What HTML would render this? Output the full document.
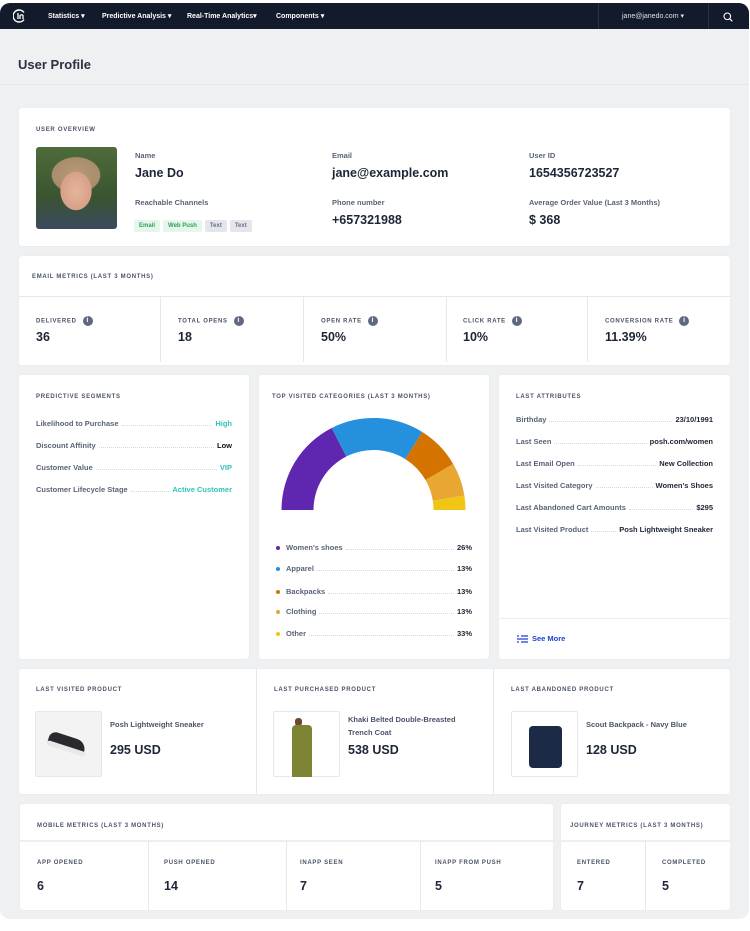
<!DOCTYPE html>
<html><head><meta charset="utf-8"><style>
*{box-sizing:border-box;margin:0;padding:0}
body{width:750px;height:931px;background:#fff;font-family:"Liberation Sans",sans-serif;color:#1e2536;position:relative;overflow:hidden}
.frame{position:absolute;left:0;top:3px;width:749px;height:916px;background:#eff0f2;border-radius:10px;overflow:hidden}
.nav{position:absolute;left:0;top:3px;width:749px;height:26px;background:#131a2b;border-radius:10px 10px 0 0}
.nav span{position:absolute;top:9px;color:#fff;font-size:7px;font-weight:bold}
.a{position:absolute}
.card{position:absolute;background:#fff;border-radius:3px;box-shadow:0 0 1px rgba(0,0,0,.08)}
.lbl{position:absolute;font-size:6px;font-weight:bold;letter-spacing:.7px;color:#4a5368}
.sm{position:absolute;font-size:7.5px;font-weight:bold;color:#5a6378}
.big{position:absolute;font-size:12.5px;font-weight:bold;color:#1e2536}
.vl{position:absolute;width:1px;background:#e6e8ec}
.hl{position:absolute;height:1px;background:#e6e8ec}
.row{position:absolute;display:flex;align-items:flex-end;font-size:7.5px;font-weight:bold;color:#5a6378}
.row .d{flex:1;border-bottom:1px dotted #d5d8de;margin:0 3px 2px}
.row b{color:#1e2536}
.tag{display:inline-block;font-size:6px;font-weight:bold;padding:3px 5px;border-radius:2px;margin-right:3px}
.i{display:inline-block;width:10px;height:10px;border-radius:50%;background:#5f6880;color:#fff;font-size:7px;text-align:center;line-height:10px;vertical-align:middle;margin-left:6px}
.dot{display:inline-block;width:4px;height:4px;border-radius:50%;margin-right:6px;vertical-align:middle}
</style></head><body>
<div class="frame"></div>
<div class="nav">
<svg class="a" style="left:13px;top:6px" width="14" height="14" viewBox="0 0 14 14"><path d="M11 3.5A6 6 0 1 0 11 10.5" stroke="#fff" stroke-width="1.4" fill="none"/><path d="M5 4v6M7 10V6.5q2-1.5 3 0V10" stroke="#fff" stroke-width="1.3" fill="none"/></svg>
<span style="left:48px">Statistics ▾</span><span style="left:102px">Predictive Analysis ▾</span><span style="left:187px">Real-Time Analytics▾</span><span style="left:276px">Components ▾</span>
<div class="a" style="left:598px;top:0;width:1px;height:26px;background:#2a3142"></div>
<div class="a" style="left:708px;top:0;width:1px;height:26px;background:#2a3142"></div>
<span style="left:622px;font-weight:normal;color:#dfe2e8">jane@janedo.com ▾</span>
<svg class="a" style="left:723px;top:9px" width="10" height="10" viewBox="0 0 10 10"><circle cx="4.3" cy="4.3" r="3.3" stroke="#fff" stroke-width="1.1" fill="none"/><path d="M6.8 6.8L9.3 9.3" stroke="#fff" stroke-width="1.2"/></svg>
</div>
<div class="a" style="left:0;top:84px;width:749px;height:1px;background:#e4e6ea"></div>
<div class="a" style="left:18px;top:57px;font-size:13px;font-weight:bold;color:#2a3142">User Profile</div>

<div class="card" style="left:19px;top:108px;width:711px;height:138px"></div>
<div class="lbl" style="left:36px;top:127px">USER OVERVIEW</div>
<div class="a" style="left:36px;top:147px;width:81px;height:82px;border-radius:3px;background:radial-gradient(ellipse 22px 27px at 40px 44px,#e6b59c 0,#d7a088 70%,transparent 72%),radial-gradient(ellipse 30px 22px at 40px 28px,#b79c78 0,#a88c6c 80%,transparent 82%),linear-gradient(180deg,#4f6c3a,#3a5530 60%,#3b4a5e)"></div>
<div class="sm" style="left:135px;top:151px">Name</div><div class="big" style="left:135px;top:166px">Jane Do</div>
<div class="sm" style="left:135px;top:198px">Reachable Channels</div>
<div class="a" style="left:134px;top:214px"><span class="tag" style="background:#e6f6ec;color:#2aa35a">Email</span><span class="tag" style="background:#e6f6ec;color:#2aa35a">Web Push</span><span class="tag" style="background:#e4e6ec;color:#6a7285">Text</span><span class="tag" style="background:#e4e6ec;color:#6a7285">Text</span></div>
<div class="sm" style="left:332px;top:151px">Email</div><div class="big" style="left:332px;top:166px">jane@example.com</div>
<div class="sm" style="left:332px;top:198px">Phone number</div><div class="big" style="left:332px;top:213px">+657321988</div>
<div class="sm" style="left:529px;top:151px">User ID</div><div class="big" style="left:529px;top:166px">1654356723527</div>
<div class="sm" style="left:529px;top:198px">Average Order Value (Last 3 Months)</div><div class="big" style="left:529px;top:213px">$ 368</div>

<div class="card" style="left:19px;top:256px;width:711px;height:109px"></div>
<div class="lbl" style="left:32px;top:274px">EMAIL METRICS (LAST 3 MONTHS)</div>
<div class="hl" style="left:19px;top:296px;width:711px"></div>
<div class="vl" style="left:160px;top:296px;height:66px"></div><div class="vl" style="left:303px;top:296px;height:66px"></div><div class="vl" style="left:446px;top:296px;height:66px"></div><div class="vl" style="left:587px;top:296px;height:66px"></div>
<div class="lbl" style="left:36px;top:316px">DELIVERED<span class="i">i</span></div><div class="big" style="left:36px;top:330px">36</div>
<div class="lbl" style="left:178px;top:316px">TOTAL OPENS<span class="i">i</span></div><div class="big" style="left:178px;top:330px">18</div>
<div class="lbl" style="left:321px;top:316px">OPEN RATE<span class="i">i</span></div><div class="big" style="left:321px;top:330px">50%</div>
<div class="lbl" style="left:463px;top:316px">CLICK RATE<span class="i">i</span></div><div class="big" style="left:463px;top:330px">10%</div>
<div class="lbl" style="left:605px;top:316px">CONVERSION RATE<span class="i">i</span></div><div class="big" style="left:605px;top:330px">11.39%</div>

<div class="card" style="left:19px;top:375px;width:230px;height:284px"></div>
<div class="card" style="left:259px;top:375px;width:230px;height:284px"></div>
<div class="card" style="left:499px;top:375px;width:231px;height:284px"></div>
<div class="lbl" style="left:36px;top:394px">PREDICTIVE SEGMENTS</div>
<div class="row" style="left:36px;top:419px;width:196px">Likelihood to Purchase<span class="d"></span><b style="color:#2ec4b6">High</b></div>
<div class="row" style="left:36px;top:441px;width:196px">Discount Affinity<span class="d"></span><b style="color:#111">Low</b></div>
<div class="row" style="left:36px;top:463px;width:196px">Customer Value<span class="d"></span><b style="color:#2ec4b6">VIP</b></div>
<div class="row" style="left:36px;top:485px;width:196px">Customer Lifecycle Stage<span class="d"></span><b style="color:#2ec4b6">Active Customer</b></div>

<div class="lbl" style="left:272px;top:394px">TOP VISITED CATEGORIES (LAST 3 MONTHS)</div>
<svg class="a" style="left:0;top:0" width="750" height="931" viewBox="0 0 750 931">
<path d="M281.5 510A92 92 0 0 1 331.7 428L346.3 456.5A60 60 0 0 0 313.5 510Z" fill="#5f27b0"/>
<path d="M331.7 428A92 92 0 0 1 422.3 432L405.3 459.1A60 60 0 0 0 346.3 456.5Z" fill="#2590de"/>
<path d="M422.3 432A92 92 0 0 1 453.2 464L425.5 480A60 60 0 0 0 405.3 459.1Z" fill="#d57300"/>
<path d="M453.2 464A92 92 0 0 1 464.4 495.6L432.8 500.6A60 60 0 0 0 425.5 480Z" fill="#e7a732"/>
<path d="M464.4 495.6A92 92 0 0 1 465.5 510L433.5 510A60 60 0 0 0 432.8 500.6Z" fill="#f1c515"/>
</svg>
<div class="row" style="left:276px;top:543px;width:196px"><span><i class="dot" style="background:#5f27b0"></i>Women's shoes</span><span class="d"></span><b>26%</b></div>
<div class="row" style="left:276px;top:564px;width:196px"><span><i class="dot" style="background:#2590de"></i>Apparel</span><span class="d"></span><b>13%</b></div>
<div class="row" style="left:276px;top:587px;width:196px"><span><i class="dot" style="background:#d57300"></i>Backpacks</span><span class="d"></span><b>13%</b></div>
<div class="row" style="left:276px;top:607px;width:196px"><span><i class="dot" style="background:#e7a732"></i>Clothing</span><span class="d"></span><b>13%</b></div>
<div class="row" style="left:276px;top:629px;width:196px"><span><i class="dot" style="background:#f1c515"></i>Other</span><span class="d"></span><b>33%</b></div>

<div class="lbl" style="left:516px;top:394px">LAST ATTRIBUTES</div>
<div class="row" style="left:516px;top:415px;width:197px">Birthday<span class="d"></span><b>23/10/1991</b></div>
<div class="row" style="left:516px;top:437px;width:197px">Last Seen<span class="d"></span><b>posh.com/women</b></div>
<div class="row" style="left:516px;top:459px;width:197px">Last Email Open<span class="d"></span><b>New Collection</b></div>
<div class="row" style="left:516px;top:481px;width:197px">Last Visited Category<span class="d"></span><b>Women's Shoes</b></div>
<div class="row" style="left:516px;top:503px;width:197px">Last Abandoned Cart Amounts<span class="d"></span><b>$295</b></div>
<div class="row" style="left:516px;top:525px;width:197px">Last Visited Product<span class="d"></span><b>Posh Lightweight Sneaker</b></div>
<div class="hl" style="left:499px;top:618px;width:231px;background:#eceef1"></div>
<svg class="a" style="left:517px;top:635px" width="11" height="8" viewBox="0 0 11 8"><path d="M0 1h2M4 1h7M0 4h11M0 7h2M4 7h7" stroke="#1e3fd0" stroke-width="1.2"/></svg>
<div class="a" style="left:532px;top:634px;font-size:7.5px;font-weight:bold;color:#1e3fd0">See More</div>

<div class="card" style="left:19px;top:669px;width:711px;height:125px"></div>
<div class="vl" style="left:256px;top:669px;height:125px"></div><div class="vl" style="left:493px;top:669px;height:125px"></div>
<div class="lbl" style="left:36px;top:687px">LAST VISITED PRODUCT</div>
<div class="a" style="left:35px;top:711px;width:67px;height:66px;background:#f3f3f3;border:1px solid #e6e8ec;border-radius:2px"><div class="a" style="left:12px;top:24px;width:38px;height:14px;background:#2a2a2e;border-radius:8px 12px 4px 4px;transform:rotate(18deg)"></div><div class="a" style="left:10px;top:34px;width:40px;height:5px;background:#e8e8e8;border-radius:3px;transform:rotate(18deg)"></div></div>
<div class="sm" style="left:110px;top:720px;color:#4a5368">Posh Lightweight Sneaker</div><div class="big" style="left:110px;top:743px">295 USD</div>
<div class="lbl" style="left:274px;top:687px">LAST PURCHASED PRODUCT</div>
<div class="a" style="left:273px;top:711px;width:67px;height:66px;background:#fff;border:1px solid #e6e8ec;border-radius:2px"><div class="a" style="left:21px;top:6px;width:7px;height:8px;background:#6b4a30;border-radius:3px"></div><div class="a" style="left:18px;top:13px;width:20px;height:52px;background:#7c8433;border-radius:4px 4px 0 0"></div></div>
<div class="sm" style="left:348px;top:713px;color:#4a5368;line-height:13px">Khaki Belted Double-Breasted<br>Trench Coat</div><div class="big" style="left:348px;top:743px">538 USD</div>
<div class="lbl" style="left:511px;top:687px">LAST ABANDONED PRODUCT</div>
<div class="a" style="left:511px;top:711px;width:67px;height:66px;background:#fff;border:1px solid #e6e8ec;border-radius:2px"><div class="a" style="left:17px;top:14px;width:33px;height:42px;background:#1d2a45;border-radius:4px"></div></div>
<div class="sm" style="left:586px;top:720px;color:#4a5368">Scout Backpack - Navy Blue</div><div class="big" style="left:586px;top:743px">128 USD</div>

<div class="card" style="left:20px;top:804px;width:533px;height:106px"></div>
<div class="card" style="left:561px;top:804px;width:169px;height:106px"></div>
<div class="hl" style="left:20px;top:840px;width:710px;height:2px;background:#eceef1"></div>
<div class="vl" style="left:148px;top:841px;height:69px"></div><div class="vl" style="left:286px;top:841px;height:69px"></div><div class="vl" style="left:420px;top:841px;height:69px"></div><div class="vl" style="left:645px;top:841px;height:69px"></div>
<div class="lbl" style="left:37px;top:823px">MOBILE METRICS (LAST 3 MONTHS)</div>
<div class="lbl" style="left:570px;top:823px">JOURNEY METRICS (LAST 3 MONTHS)</div>
<div class="lbl" style="left:37px;top:860px">APP OPENED</div><div class="big" style="left:37px;top:879px">6</div>
<div class="lbl" style="left:164px;top:860px">PUSH OPENED</div><div class="big" style="left:164px;top:879px">14</div>
<div class="lbl" style="left:300px;top:860px">INAPP SEEN</div><div class="big" style="left:300px;top:879px">7</div>
<div class="lbl" style="left:435px;top:860px">INAPP FROM PUSH</div><div class="big" style="left:435px;top:879px">5</div>
<div class="lbl" style="left:577px;top:860px">ENTERED</div><div class="big" style="left:577px;top:879px">7</div>
<div class="lbl" style="left:662px;top:860px">COMPLETED</div><div class="big" style="left:662px;top:879px">5</div>
</body></html>
